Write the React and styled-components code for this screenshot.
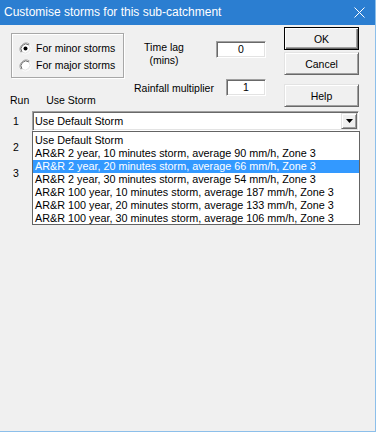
import React from "react";
import styled, { createGlobalStyle } from "styled-components";

const Global = createGlobalStyle`
  html, body { margin: 0; padding: 0; background: #f0f0f0; }
  body { font-family: "Liberation Sans", Arial, sans-serif; }
  * { box-sizing: border-box; }
`;

const Window = styled.div`
  width: 376px;
  height: 432px;
  background: #f0f0f0;
  border-right: 1px solid #8cbfea;
  border-bottom: 1px solid #8cbfea;
  font-family: "Liberation Sans", Arial, sans-serif;
  font-size: 10.5px;
  color: #000;
`;

const TitleBar = styled.div`
  height: 25px;
  background: #2b7ed1;
  display: flex;
  align-items: center;
  justify-content: space-between;
  padding: 0 10px 0 4px;
  color: #fff;
`;

const Title = styled.span`
  font-size: 12px;
  line-height: 16px;
  margin-top: -1px;
`;

const Body = styled.div`
  display: flex;
  flex-direction: column;
`;

const TopBlock = styled.div`
  display: flex;
  align-items: flex-start;
`;

const LeftTop = styled.div`
  width: 284px;
  display: flex;
  flex-direction: column;
`;

const Row1 = styled.div`
  display: flex;
  align-items: flex-start;
  padding-top: 8px;
`;

const GroupBox = styled.div`
  margin-left: 11px;
  width: 113px;
  height: 45px;
  border: 1px solid #a7a7a7;
  box-shadow: inset 1px 1px 0 #fff, 1px 1px 0 #fff;
  padding: 6px 0 0 7px;
  display: flex;
  flex-direction: column;
`;

const RadioRow = styled.label`
  display: flex;
  align-items: center;
  height: 17px;
  gap: 4px;
  line-height: 13px;
`;

const RadioSvg = styled.svg`
  width: 13px;
  height: 13px;
  flex: none;
`;

function Radio({ checked }) {
  return (
    <RadioSvg viewBox="0 0 13 13">
      <circle cx="6.5" cy="6.5" r="6" fill="#fff" />
      <path d="M2.3 10.7 A6 6 0 0 1 10.7 2.3" fill="none" stroke="#a0a0a0" strokeWidth="1" />
      <path d="M3 10 A5 5 0 0 1 10 3" fill="none" stroke="#696969" strokeWidth="1" />
      <path d="M10.7 2.3 A6 6 0 0 1 2.3 10.7" fill="none" stroke="#f6f6f6" strokeWidth="1" />
      <path d="M10 3 A5 5 0 0 1 3 10" fill="none" stroke="#e3e3e3" strokeWidth="1" />
      {checked && <circle cx="6.5" cy="6.5" r="2" fill="#000" />}
    </RadioSvg>
  );
}

const TimeLagLabel = styled.div`
  margin-left: 10px;
  margin-top: 8px;
  width: 60px;
  text-align: center;
  line-height: 13px;
`;

const TextBox = styled.div`
  margin-left: ${(p) => p.$ml || 0}px;
  margin-top: ${(p) => p.$mt || 0}px;
  width: ${(p) => p.$w}px;
  height: 17px;
  background: #fff;
  border-top: 1px solid #a0a0a0;
  border-left: 1px solid #a0a0a0;
  border-right: 1px solid #fff;
  border-bottom: 1px solid #fff;
  box-shadow: inset 1px 1px 0 #696969, inset -1px -1px 0 #e3e3e3;
  text-align: center;
  line-height: 15px;
  font-size: 10.5px;
`;

const Row2 = styled.div`
  display: flex;
  align-items: flex-start;
  margin-top: 1px;
`;

const FieldLabel = styled.div`
  margin-left: 134px;
  margin-top: 3px;
  width: 92px;
  line-height: 13px;
  white-space: nowrap;
`;

const HeaderRow = styled.div`
  display: flex;
  margin-top: -2px;
  line-height: 12px;
`;

const HeadCell = styled.span`
  margin-left: ${(p) => p.$ml}px;
`;

const Buttons = styled.div`
  margin-top: 2px;
  width: 75px;
  display: flex;
  flex-direction: column;
`;

const Button = styled.button`
  width: 75px;
  height: 23px;
  margin-top: ${(p) => p.$mt || 0}px;
  padding: 0;
  font-family: "Liberation Sans", Arial, sans-serif;
  font-size: 10.5px;
  color: #000;
  background: #f0f0f0;
  border: 1px solid ${(p) => (p.$default ? "#000" : "#e3e3e3")};
  border-right-color: ${(p) => (p.$default ? "#000" : "#696969")};
  border-bottom-color: ${(p) => (p.$default ? "#000" : "#696969")};
  box-shadow: ${(p) =>
    p.$default
      ? "inset 1px 1px 0 #fff, inset -1px -1px 0 #696969, inset -2px -2px 0 #a0a0a0"
      : "inset 1px 1px 0 #fff, inset -1px -1px 0 #a0a0a0"};
`;

const StormTable = styled.div`
  position: relative;
  padding-top: 4px;
  font-size: 10.8px;
`;

const TableRow = styled.div`
  display: flex;
  align-items: center;
  height: 20px;
  margin-bottom: 6px;
`;

const RunNum = styled.span`
  width: 32px;
  text-align: center;
  font-size: 10.5px;
`;

const Combo = styled.div`
  width: 327px;
  height: 20px;
  background: #fff;
  border-top: 1px solid #a0a0a0;
  border-left: 1px solid #a0a0a0;
  border-right: 1px solid #fff;
  border-bottom: 1px solid #fff;
  box-shadow: inset 1px 1px 0 #696969, inset -1px -1px 0 #e3e3e3;
  display: flex;
  align-items: center;
  justify-content: space-between;
  padding: 1px 1px 1px 2px;
`;

const ComboText = styled.span`
  line-height: 16px;
  white-space: nowrap;
`;

const DropButton = styled.div`
  width: 16px;
  height: 16px;
  background: #f0f0f0;
  border-top: 1px solid #e3e3e3;
  border-left: 1px solid #e3e3e3;
  border-right: 1px solid #696969;
  border-bottom: 1px solid #696969;
  box-shadow: inset 1px 1px 0 #fff, inset -1px -1px 0 #a0a0a0;
  display: flex;
  align-items: center;
  justify-content: center;
`;

const DropList = styled.ul`
  position: absolute;
  left: 32px;
  top: 24px;
  width: 328px;
  height: 94px;
  margin: 0;
  padding: 2px 0 0 0;
  list-style: none;
  background: #fff;
  border: 1px solid #646464;
`;

const Item = styled.li`
  height: 13px;
  line-height: 13px;
  padding-left: 2px;
  white-space: nowrap;
  background: ${(p) => (p.$sel ? "#3399ff" : "transparent")};
  color: ${(p) => (p.$sel ? "#fff" : "#000")};
`;

const storms = [
  "Use Default Storm",
  "AR&R 2 year, 10 minutes storm, average 90 mm/h, Zone 3",
  "AR&R 2 year, 20 minutes storm, average 66 mm/h, Zone 3",
  "AR&R 2 year, 30 minutes storm, average 54 mm/h, Zone 3",
  "AR&R 100 year, 10 minutes storm, average 187 mm/h, Zone 3",
  "AR&R 100 year, 20 minutes storm, average 133 mm/h, Zone 3",
  "AR&R 100 year, 30 minutes storm, average 106 mm/h, Zone 3",
];

export default function App() {
  return (
    <>
      <Global />
      <Window>
        <TitleBar>
          <Title>Customise storms for this sub-catchment</Title>
          <svg width="11" height="11" viewBox="0 0 11 11">
            <path d="M0.5 0.5 L10.5 10.5 M10.5 0.5 L0.5 10.5" stroke="#fff" strokeWidth="1" />
          </svg>
        </TitleBar>
        <Body>
          <TopBlock>
            <LeftTop>
              <Row1>
                <GroupBox>
                  <RadioRow>
                    <Radio checked />
                    <span>For minor storms</span>
                  </RadioRow>
                  <RadioRow>
                    <Radio />
                    <span>For major storms</span>
                  </RadioRow>
                </GroupBox>
                <TimeLagLabel>
                  Time lag
                  <br />
                  (mins)
                </TimeLagLabel>
                <TextBox $w={50} $ml={22} $mt={8}>0</TextBox>
              </Row1>
              <Row2>
                <FieldLabel>Rainfall multiplier</FieldLabel>
                <TextBox $w={40}>1</TextBox>
              </Row2>
              <HeaderRow>
                <HeadCell $ml={10}>Run</HeadCell>
                <HeadCell $ml={17}>Use Storm</HeadCell>
              </HeaderRow>
            </LeftTop>
            <Buttons>
              <Button $default>OK</Button>
              <Button $mt={2}>Cancel</Button>
              <Button $mt={9}>Help</Button>
            </Buttons>
          </TopBlock>
          <StormTable>
            {[1, 2, 3].map((n) => (
              <TableRow key={n}>
                <RunNum>{n}</RunNum>
                <Combo>
                  <ComboText>{n === 1 ? "Use Default Storm" : ""}</ComboText>
                  <DropButton>
                    <svg width="7" height="4" viewBox="0 0 7 4">
                      <path d="M0 0 H7 L3.5 4 Z" fill="#000" />
                    </svg>
                  </DropButton>
                </Combo>
              </TableRow>
            ))}
            <DropList>
              {storms.map((s, i) => (
                <Item key={i} $sel={i === 2}>
                  {s}
                </Item>
              ))}
            </DropList>
          </StormTable>
        </Body>
      </Window>
    </>
  );
}
